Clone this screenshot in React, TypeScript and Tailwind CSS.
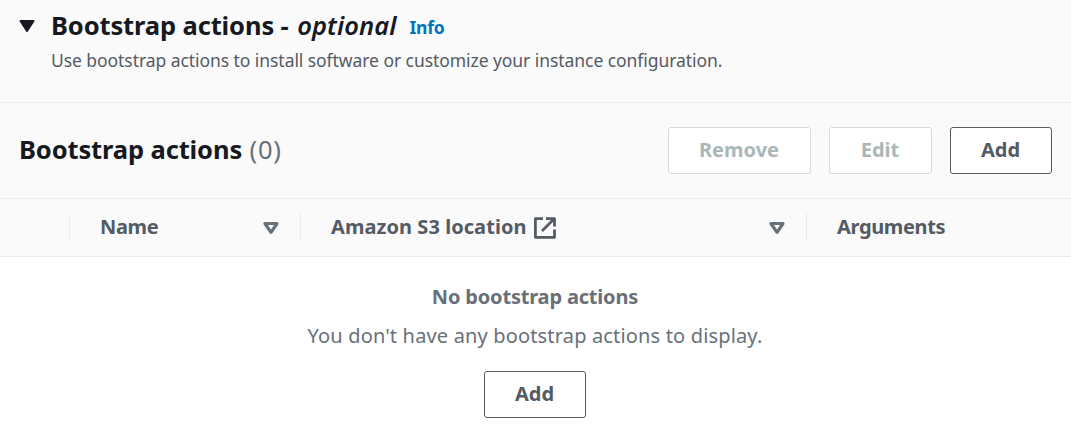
import type { ReactNode } from "react";

function Button({ children, disabled, className }: { children: ReactNode; disabled?: boolean; className: string }) {
  return (
    <button
      disabled={disabled}
      className={`flex h-[47px] items-center justify-center rounded-[3px] border bg-white pr-px pb-px text-[20px] font-bold ${
        disabled ? "border-[#d5dbdb] text-[#aab7b8]" : "border-[#545b64] text-[#545b64]"
      } ${className}`}
    >
      {children}
    </button>
  );
}

function SortIcon() {
  return (
    <svg width="16" height="14" viewBox="0 0 16 14" className="shrink-0">
      <path d="M2 2.5 H14 L8 11.3 Z" fill="none" stroke="#687078" strokeWidth="3.2" strokeLinejoin="round" />
    </svg>
  );
}

function ExternalIcon() {
  return (
    <svg width="22" height="22" viewBox="0 0 22 22" fill="none" stroke="#545b64" strokeWidth="2.8" strokeLinejoin="round" className="shrink-0">
      <path d="M9 1.7 H1.4 V20.3 H20.5 V12.5" />
      <path d="M12 1.7 H20.5 V9.5 M20 2 L8 14" />
    </svg>
  );
}

export default function App() {
  return (
    <main className="h-[436px] w-[1071px] overflow-hidden whitespace-nowrap bg-white font-['Noto_Sans',sans-serif] text-[#545b64]">
      <header className="flex h-[103px] border-b border-[#eaeded] bg-[#fafafa] pl-[19px]">
        <svg width="16" height="13" viewBox="0 0 16 13" className="mt-[20px] mr-4 shrink-0">
          <path d="M1.5 1 H14.5 L8 11 Z" fill="#16191f" stroke="#16191f" strokeWidth="2" strokeLinejoin="round" />
        </svg>
        <div>
          <div className="mt-[8px] flex h-[34px] items-start leading-[34px]">
            <h1 className="text-[25.5px] font-bold tracking-[-0.12px] text-[#16191f]">
              Bootstrap actions <span className="mr-0.5">-</span> <span className="font-semibold tracking-[0.1px] italic">optional</span>
            </h1>
            <a className="mt-[2px] ml-[13px] text-[17.5px] font-bold tracking-[-0.3px] text-[#0073bb]">Info</a>
          </div>
          <p className="mt-[5px] text-[17.5px] leading-[26px] tracking-[-0.062px]">
            Use bootstrap actions to install software or customize your instance configuration.
          </p>
        </div>
      </header>
      <section>
        <div className="flex h-[96px] items-center justify-between border-b border-[#eaeded] bg-[#fafafa] pr-[19px] pl-[19px]">
          <h2 className="pb-0.5 text-[25.5px] font-bold tracking-[-0.12px] text-[#16191f]">
            Bootstrap actions <span className="ml-px font-normal tracking-[0.7px] text-[#687078]">(0)</span>
          </h2>
          <div className="flex">
            <Button disabled className="w-[143px]">Remove</Button>
            <Button disabled className="ml-[18px] w-[103px]">Edit</Button>
            <Button className="ml-[18px] w-[102px]">Add</Button>
          </div>
        </div>
        <div className="flex h-[58px] items-center border-b border-[#eaeded] bg-[#fafafa] text-[20px] font-bold tracking-[-0.35px]">
          <div className="h-[29px] w-[70px] border-r border-[#eaeded]" />
          <div className="flex h-[29px] w-[231px] items-center justify-between border-r border-[#eaeded] pr-[21px] pl-[30px]">
            <span className="pb-0.5">Name</span>
            <SortIcon />
          </div>
          <div className="flex h-[29px] w-[506px] items-center border-r border-[#eaeded] pr-[21px] pl-[30px]">
            <span className="mr-[7px] pb-0.5 tracking-[0.06px]">Amazon S3 location</span>
            <ExternalIcon />
            <div className="ml-auto flex"><SortIcon /></div>
          </div>
          <span className="pb-0.5 pl-[30px]">Arguments</span>
        </div>
        <div className="flex flex-col items-center pr-px text-[#687078]">
          <p className="mt-[25px] text-[20px] leading-[30px] font-bold tracking-[-0.18px]">No bootstrap actions</p>
          <p className="mt-[9px] text-[20px] leading-[30px] tracking-[0.16px]">You don't have any bootstrap actions to display.</p>
          <Button className="mt-5 w-[102px]">Add</Button>
        </div>
      </section>
    </main>
  );
}
